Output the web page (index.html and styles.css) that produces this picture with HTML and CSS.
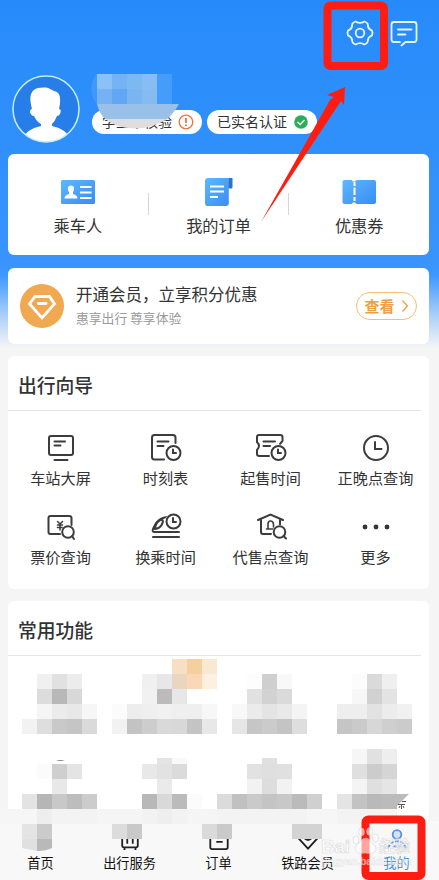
FILE: index.html
```html
<!DOCTYPE html>
<html lang="zh-CN">
<head>
<meta charset="utf-8">
<title>我的</title>
<link rel="stylesheet" href="styles.css">
</head>
<body>
<div class="screen">
  <header class="header">
    <div class="actions">
      <svg width="28" height="28" viewBox="0 0 28 28" class="line-icon"><path d="M9.7 2.5Q14 5.4 18.3 2.5Q21 3.2 21.8 5.2Q21.6 9.8 26 11.6Q27 14 26 16.400Q21.600 18.200 21.800 22.500Q21 24.800 18.300 25.500Q14 22.600 9.700 25.500Q7 24.800 6.200 22.500Q6.400 18.200 2 16.400Q1 14 2 11.600Q6.400 9.800 6.200 5.200Q7 3.200 9.700 2.500Z"/><circle cx="14" cy="14" r="4.300"/></svg>
      <svg width="28" height="28" viewBox="0 0 28 28" class="line-icon"><path d="M10 23H4Q1.500 23 1.500 20.500V5.500Q1.500 3 4 3H24Q26.500 3 26.500 5.500V20.500Q26.500 23 24 23H15.500L11.500 26.500M8 10.500H21.500M8 15.500H15.500"/></svg>
    </div>
    <div class="profile">
      <svg class="avatar" width="68" height="68" viewBox="0 0 68 68"><defs><clipPath id="face"><circle cx="34" cy="34" r="33"/></clipPath></defs><circle cx="34" cy="34" r="33" fill="#277ee8"/><g clip-path="url(#face)" fill="#fff"><path d="M20 34C15 16 22 12 33 12.500C37 12 39 15 42 16C49 17 49 25 47 34Q50 34 48 39Q47 41 45 41Q43 46 40 49V51Q56 54 61 68H7Q13 54 29 51V49Q24 46 22 41Q19 41 18 37Q18 34 20 34Z"/></g><circle cx="34" cy="34" r="33" fill="none" stroke="#c5effc" stroke-width="1.500"/></svg>
      <div class="badges">
        <span class="badge"><span class="badge-label">学生未核验</span><svg width="16" height="16" viewBox="0 0 16 16"><circle cx="8" cy="8" r="6.800" fill="none" stroke="#ec7440" stroke-width="1.300"/><path d="M8 4V9M8 10.500V12" stroke="#ec7440" stroke-width="1.800"/></svg></span>
        <span class="badge"><span class="badge-label">已实名认证</span><svg width="16" height="16" viewBox="0 0 16 16"><circle cx="8" cy="8" r="6.800" fill="#2bad59"/><path d="M4.500 8L7.200 10.500L11.500 6" fill="none" stroke="#fff" stroke-width="1.300"/></svg></span>
      </div>
    </div>
  </header>

  <section class="card shortcuts">
    <div class="shortcut"><svg width="36" height="30" viewBox="0 0 36 30"><defs><linearGradient id="blue" x2="1" y2="1"><stop stop-color="#5eb8fc"/><stop offset="1" stop-color="#388cf4"/></linearGradient></defs><rect x="1" y="3" width="34" height="24" rx="1.500" fill="url(#blue)"/><path d="M11 8.500C15 8.500 14.500 13 13 15V17Q17.500 18 17.500 21.500H4.500Q4.500 18 9 17V15C7.500 13 7 8.500 11 8.500Z" fill="#fff"/><path d="M20 10H31.500M20 15.500H31.500M20 21H31.500" stroke="#fff" stroke-width="2"/></svg><span>乘车人</span></div>
    <i class="divider"></i>
    <div class="shortcut"><svg width="36" height="30" viewBox="0 0 36 30"><path d="M27 1H31.500V10Q31.500 11.500 30 11.500H27Z" fill="#2475cb"/><path d="M7 1H28.500Q27.800 2 27.800 4V26Q27.800 29 25 29H6.500Q4 29 4 26V4Q4 1 7 1Z" fill="url(#blue)"/><path d="M9 9.500H23M9 14.500H23M9 20H17" stroke="#fff" stroke-width="2"/></svg><span>我的订单</span></div>
    <i class="divider"></i>
    <div class="shortcut"><svg width="36" height="30" viewBox="0 0 36 30"><path d="M3.500 3H10.500Q13 6.500 15.500 3H33Q35 3 35 5V25Q35 27 33 27H15.500Q13 23.500 10.500 27H3.500Q1.500 27 1.500 25V5Q1.500 3 3.500 3Z" fill="url(#blue)"/><path d="M13.500 5V9M13.500 10.500V18M13.500 20V24" stroke="#fff" stroke-width="2"/></svg><span>优惠券</span></div>
  </section>

  <section class="card member">
    <svg width="44" height="44" viewBox="0 0 44 44"><circle cx="22" cy="22" r="22" fill="#f1a951"/><path d="M15 12.500H29.500L34.500 20L22 34L9.500 20Z" fill="none" stroke="#fff" stroke-width="2.800"/><path d="M18.500 19.500H26" stroke="#fff" stroke-width="2.800" stroke-linecap="round"/></svg>
    <div class="member-text"><b>开通会员，立享积分优惠</b><small>惠享出行 尊享体验</small></div>
    <span class="view">查看<svg width="8" height="14" viewBox="0 0 8 14"><path d="M1.500 1.500L6.500 7L1.500 12.500" fill="none" stroke="#ed9f45" stroke-width="1.300"/></svg></span>
  </section>

  <section class="card guide">
    <h2>出行向导</h2>
    <div class="grid">
      <div class="item"><svg viewBox="0 0 32 30"><rect x="4" y="3" width="24" height="19" rx="2"/><path d="M9.500 8.500H20M9.500 12.500H15.500M9.500 27H22.500"/></svg><span>车站大屏</span></div>
      <div class="item"><svg viewBox="0 0 32 30"><path d="M14 26.500H4.500Q2 26.500 2 24V4.500Q2 2 4.500 2H23Q25.500 2 25.500 4.500V10M7.500 8.500H18.500M7.500 13H13.500"/><circle class="gap" cx="23.500" cy="20" r="8.500"/><circle cx="23.500" cy="20" r="7"/><path d="M23 16.500V20H26"/></svg><span>时刻表</span></div>
      <div class="item"><svg viewBox="0 0 32 30"><path d="M14 23H4.500Q2 23 2 21V17Q6 13 2 9V4Q2 2 4 2H25Q27.500 2 27.500 4V8L25 11M8.500 8.500H20M8.500 13H15"/><circle class="gap" cx="23.500" cy="20" r="8.500"/><circle cx="23.500" cy="20" r="7"/><path d="M23 16.500V20H26"/></svg><span>起售时间</span></div>
      <div class="item"><svg viewBox="0 0 32 30"><circle cx="16" cy="15" r="12"/><path d="M15 9V16H21.500"/></svg><span>正晚点查询</span></div>
      <div class="item"><svg viewBox="0 0 32 30"><path d="M15 22H5.500Q3.500 22 3.500 20V6Q3.500 4 5.500 4H24Q26.500 4 26.500 6V13"/><path d="M12.500 9.500L15 12L17.500 9.500M12.500 13H17.500M12.500 15.500H17.500M15 12V18" stroke-width="1.500"/><circle class="gap" cx="23" cy="20" r="7"/><circle cx="23" cy="20" r="5.800"/><path d="M27 24L29 27"/></svg><span>票价查询</span></div>
      <div class="item"><svg viewBox="0 0 32 30"><path d="M17 5Q10 6 6 11L3 17Q2 20 4 20H29M3 25H29M5 17C12 16 14 9 12 7.500C8 8 5 13 5 17"/><circle class="gap" cx="23.500" cy="9.500" r="8.500"/><circle cx="23.500" cy="9.500" r="7"/><path d="M23 6V10H26"/></svg><span>换乘时间</span></div>
      <div class="item"><svg viewBox="0 0 32 30"><path d="M3 8L15.500 2.500L28 8M6 8V20Q6 22 8 22H16M25 8V13"/><path d="M11.500 17H20M13 17V12Q13 9 15.500 9T18.500 12V15" stroke-width="1.600"/><circle class="gap" cx="24.500" cy="20" r="7"/><circle cx="24.500" cy="20" r="5.800"/><path d="M28.500 24L31 26.500"/></svg><span>代售点查询</span></div>
      <div class="item"><svg viewBox="0 0 32 30"><g fill="#333" stroke="none"><circle cx="5" cy="15" r="2.400"/><circle cx="16" cy="15" r="2.400"/><circle cx="27" cy="15" r="2.400"/></g></svg><span>更多</span></div>
    </div>
  </section>

  <section class="card common"><h2>常用功能</h2></section>

  <nav class="tabs">
    <div class="tab"><svg viewBox="0 0 24 24"></svg><span>首页</span></div>
    <div class="tab"><svg viewBox="0 0 24 24"><path d="M3.500 3V18Q3.500 20 5.500 20H18.500Q20.500 20 20.500 18V3M9 8V16M15 8V16M6 20V23M18 20V23"/></svg><span>出行服务</span></div>
    <div class="tab"><svg viewBox="0 0 24 24"><path d="M2.500 3V20Q2.500 22 4.500 22H19.500Q21.500 22 21.500 20V3M9 14H16"/></svg><span>订单</span></div>
    <div class="tab"><svg viewBox="0 0 24 24"><path d="M4 5L1 9.500L12 21.500L23 9.500L20 5M7 9Q12 15 17 9"/></svg><span>铁路会员</span></div>
    <div class="tab active"><svg viewBox="0 0 24 24"><circle cx="12" cy="6" r="4.700"/><path d="M2.500 21Q4 13.500 12 13.500T21.500 21M8 19H16" stroke-dasharray="4 1.500"/></svg><span>我的</span></div>
  </nav>

  <svg class="overlay" width="439" height="880" viewBox="0 0 439 880">
    <g shape-rendering="crispEdges">
      <path d="M97 74C90 79 89 96 97 104Z" fill="#3f99fa" shape-rendering="auto"/>
      <path d="M97 74h15v15h-15z" fill="#8bc1f7"/><path d="M112 74h15v15h-15z" fill="#75b3f5"/><path d="M127 74h15v15h-15z" fill="#7db8f1"/><path d="M142 74h15v15h-15z" fill="#88bdf4"/><path d="M157 74h15v15h-15z" fill="#459dfb"/>
      <path d="M97 89h15v15h-15z" fill="#76b2f3"/><path d="M112 89h15v15h-15z" fill="#62a7f4"/><path d="M127 89h15v15h-15z" fill="#79b5f0"/><path d="M142 89h15v15h-15z" fill="#85bbf1"/><path d="M157 89h15v15h-15z" fill="#459dfb"/>
    </g>
    <path d="M97 104H179Q174 113 167 119H105Q99 113 97 104Z" fill="#98c0e8"/>
    <path d="M105 119H167Q153 128.500 134 128.500Q116 128 105 119Z" fill="#dedede"/>
    <g shape-rendering="crispEdges">
      <path d="M172 659h15v15h-15z" fill="#f6dfc2"/><path d="M187 659h15v15h-15z" fill="#f6cf9e"/><path d="M202 659h15v15h-15z" fill="#f9e8d2"/>
      <path d="M172 674h15v15h-15z" fill="#ead5bf"/><path d="M187 674h15v15h-15z" fill="#fbd8b5"/><path d="M202 674h15v15h-15z" fill="#fdf0e0"/>
      <g id="tiles"></g>
    </g>
    <path d="M22 839H52V848Q46 851 37 851L22 848Z" fill="#e0e0e0"/><path d="M37 839H52V848Q46 851 37 851Z" fill="#b9b9b9"/>
    <path d="M397 794H409L397 806Z" fill="#bbb"/>
    <path d="M398 804.500H405M401.500 804.500V809M399 808L400 806M404 808L403 806M402 801.500H406" stroke="#555" stroke-width="1"/>
    <path d="M56 761Q60 759 65 761Z" fill="#888"/>
    <rect x="327.500" y="5.500" width="56.500" height="60.500" rx="3" fill="none" stroke="#ff1c10" stroke-width="8"/>
    <path d="M261 222L330 100L334 97L327 95L345 87L344 105L341 101L337 107Z" fill="#ff1c10"/>
    <rect x="365.500" y="819.500" width="56" height="56.500" rx="3" fill="none" stroke="#ff1c10" stroke-width="8"/>
    <g class="watermark">
      <text x="321" y="853" font-size="19" textLength="29">Bai</text>
      <ellipse cx="356" cy="840" rx="3" ry="4"/><ellipse cx="361.500" cy="832" rx="3" ry="4"/><ellipse cx="369.500" cy="831.500" rx="3" ry="4"/><ellipse cx="375.500" cy="838" rx="3" ry="4"/><path d="M366 838Q369 838 372 843Q378 847 375 852Q371 855 365 853Q359 855 356 851Q353 847 359 843Q362 838 366 838Z"/>
      <text x="379" y="852" font-size="15.500">经验</text>
      <text class="address" x="322" y="865" font-size="10.500" textLength="89">jingyan.baidu.com</text>
    </g>
  </svg>
</div>
<script src="mosaic.js"></script>
</body>
</html>
```
FILE: styles.css
```css
* { box-sizing: border-box; }
body { margin: 0; font-family: "Noto Sans CJK SC", sans-serif; color: #333; }
.screen { position: relative; width: 439px; height: 880px; overflow: hidden; display: flex; flex-direction: column; background: linear-gradient(#268bfa 0, #3894fc 260px, #3c98fe 275px, #a9cff8 315px, #f5f5f5 348px); }
.header { height: 154px; flex: none; padding: 19px 21px 0 12px; }
.actions { display: flex; justify-content: flex-end; gap: 16px; height: 56px; }
.line-icon { fill: none; stroke: #e8f5ff; stroke-width: 1.8; stroke-linejoin: round; stroke-linecap: round; }
.profile { display: flex; gap: 12px; }
.avatar { flex: none; }
.badges { display: flex; gap: 5px; padding-top: 35px; }
.badge { display: flex; align-items: center; justify-content: space-between; width: 110px; height: 24px; padding: 0 8px 0 10px; border-radius: 12px; background: #fff; font-size: 14px; line-height: 22px; white-space: nowrap; }
.badge-label { height: 24px; }
.card { flex: none; margin: 0 10px 0 8px; border-radius: 6px; background: #fff; }
.shortcuts { height: 101px; display: flex; align-items: flex-start; padding-top: 23px; }
.shortcut { flex: 1; display: flex; flex-direction: column; align-items: center; gap: 6px; font-size: 16.2px; line-height: 24px; }
.divider { width: 1px; height: 22px; margin-top: 16px; background: #d5d5d5; }
.member { height: 76px; margin-top: 13px; display: flex; align-items: center; padding: 0 12px; }
.member-text { flex: 1; display: flex; flex-direction: column; padding: 0 0 2px 12px; }
.member-text b { font-size: 16.5px; line-height: 26px; font-weight: 400; }
.member-text small { font-size: 12.8px; line-height: 22px; color: #999; }
.view { display: flex; align-items: center; justify-content: center; gap: 6px; width: 61px; height: 28px; border: 1px solid #f5bd7b; border-radius: 14px; color: #ed9f45; font-size: 15px; font-weight: 700; line-height: 26px; }
h2 { margin: 0 8px 0 0; padding-left: 10px; border-bottom: 1px solid #e5e5e5; font-size: 18.8px; font-weight: 500; height: 55px; line-height: 57px; }
.guide { height: 233px; margin-top: 12px; }
.grid { display: grid; grid-template-columns: repeat(4, 105px); grid-auto-rows: 79px; padding-top: 22px; }
.item { display: flex; flex-direction: column; align-items: center; gap: 3px; font-size: 15.2px; line-height: 22px; white-space: nowrap; }
.item svg { width: 32px; height: 30px; fill: none; stroke: #3c3c3c; stroke-width: 2; stroke-linecap: round; }
.item .gap { fill: #fff; stroke: none; }
.common { height: 220px; margin-top: 12px; }
.tabs { flex: none; height: 59px; display: flex; background: #f8f8f8; color: #111; }
.tab { width: 89px; flex: none; display: flex; flex-direction: column; align-items: center; font-size: 13.2px; line-height: 20px; padding-top: 8px; gap: 2px; }
.tab:first-child { width: 85px; padding-right: 4px; }
.tab svg { width: 22px; height: 22px; fill: none; stroke: #222; stroke-width: 2; }
.tab.active { color: #3d96e8; }
.tab.active svg { stroke: #5a8fee; fill: #d3e3fb; }
.tab.active path { fill: none; }
.overlay { position: absolute; left: 0; top: 0; }
.watermark { fill: #fff; fill-opacity: .6; stroke: #bbb; stroke-opacity: .5; stroke-width: .7; font-family: "Liberation Sans", "Noto Sans CJK SC", sans-serif; font-weight: 700; }
.address { fill-opacity: .55; stroke-opacity: .3; }
```
FILE: mosaic.js
```js
// Each run: [x, y, grey levels], one 15px tile per level.
const runs = [
  [37,674,'f0 e1 ec'],[142,674,'f0 e7'],[247,674,'fd cf f8'],[352,674,'fc da ef'],
  [37,689,'dc b8 d8'],[142,689,'f1 bb e7'],[247,689,'e1 d2 da'],[352,689,'f7 d1 e3'],
  [37,704,'f5 eb e8 f6'],[112,704,'fb ed ef f1 ef ef f7'],[232,704,'f8 eb e4 e9 f4'],[337,704,'ee ee e2 ec f1'],
  [22,719,'f2 de c9 c5 da'],[112,719,'f2 c3 cd d9 d8 c4 e8'],[232,719,'e6 c6 cb c4 de'],[337,719,'c5 ca d7 cf cb'],
  [352,749,'f6 e1 ee'],[157,758,'e4 f9'],[262,758,'e0'],
  [37,764,'fb cf e4'],[142,764,'e8 e2 db'],[247,764,'e2 df e0'],[352,764,'df cc d5'],
  [52,779,'e8'],[157,779,'ea'],[247,779,'f2 dd f2'],[352,779,'f4 df e5'],
  [22,794,'e3 b6 c8 bd cc'],[142,794,'b8 d9 bb fb'],[217,794,'db c1 ca c4 c8 bb d0'],[337,794,'e4 c3 b9 bb'],
  [-8,809,'f6 f6 f6 ee f3 f3 f3 f5 f5 f5 f2 ee f2 f5 f5 f3 f3 f3 f3 f3 f3 f6 f6 f3 f3 f3 f5'],
  [22,824,'e4 cb'],[112,824,'dc c9'],[202,824,'da ca'],[292,824,'d3 d3']
];
const tiles = document.getElementById('tiles');
for (const [x, y, levels] of runs) {
  levels.split(' ').forEach((v, i) => {
    const r = document.createElementNS('http://www.w3.org/2000/svg', 'rect');
    r.setAttribute('x', x + i * 15);
    r.setAttribute('y', y);
    r.setAttribute('width', 15);
    r.setAttribute('height', y === 758 ? 6 : 15);
    r.setAttribute('fill', '#' + v + v + v);
    tiles.appendChild(r);
  });
}
```
